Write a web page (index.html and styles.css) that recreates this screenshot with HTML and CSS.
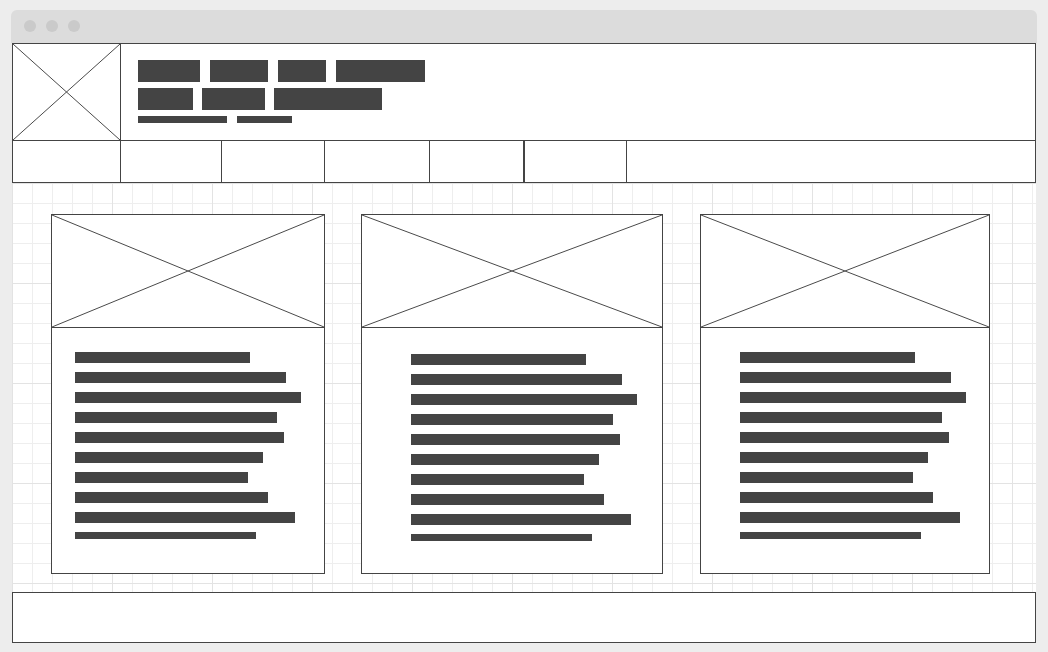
FILE: index.html
```html
<!DOCTYPE html>
<html lang="en">
<head>
    <meta charset="UTF-8">
    <meta name="viewport" content="width=device-width, initial-scale=1.0">
    <title>Wireframe</title>
    <link rel="stylesheet" href="styles.css">
</head>
<body>
    <div class="window">
        <div class="titlebar">
            <span class="dot"></span>
            <span class="dot"></span>
            <span class="dot"></span>
        </div>

        <div class="header">
            <div class="header-top">
                <div class="logo">
                    <svg class="cross" viewBox="0 0 100 100" preserveAspectRatio="none">
                        <line x1="0" y1="0" x2="100" y2="100" />
                        <line x1="100" y1="0" x2="0" y2="100" />
                    </svg>
                </div>
                <div class="title-block">
                    <div class="title-row">
                        <span class="blk" style="width: 62px"></span>
                        <span class="blk" style="width: 58px"></span>
                        <span class="blk" style="width: 48px"></span>
                        <span class="blk" style="width: 89px"></span>
                    </div>
                    <div class="title-row tight">
                        <span class="blk" style="width: 55px"></span>
                        <span class="blk" style="width: 63px"></span>
                        <span class="blk" style="width: 108px"></span>
                    </div>
                    <div class="title-row sub">
                        <span class="blk" style="width: 89px"></span>
                        <span class="blk" style="width: 55px"></span>
                    </div>
                </div>
            </div>
            <div class="nav">
                <div class="nav-cell" style="width: 108px"></div>
                <div class="nav-cell" style="width: 101px"></div>
                <div class="nav-cell" style="width: 103px"></div>
                <div class="nav-cell" style="width: 105px"></div>
                <div class="nav-cell heavy" style="width: 95px"></div>
                <div class="nav-cell" style="width: 102px"></div>
                <div class="nav-cell last"></div>
            </div>
        </div>

        <div class="main">
            <div class="card card-a">
                <div class="card-img">
                    <svg class="cross" viewBox="0 0 100 100" preserveAspectRatio="none">
                        <line x1="0" y1="0" x2="100" y2="100" />
                        <line x1="100" y1="0" x2="0" y2="100" />
                    </svg>
                </div>
                <div class="card-body">
                    <span class="line" style="width: 175px"></span>
                    <span class="line" style="width: 211px"></span>
                    <span class="line" style="width: 226px"></span>
                    <span class="line" style="width: 202px"></span>
                    <span class="line" style="width: 209px"></span>
                    <span class="line" style="width: 188px"></span>
                    <span class="line" style="width: 173px"></span>
                    <span class="line" style="width: 193px"></span>
                    <span class="line" style="width: 220px"></span>
                    <span class="line short" style="width: 181px"></span>
                </div>
            </div>

            <div class="card card-b">
                <div class="card-img">
                    <svg class="cross" viewBox="0 0 100 100" preserveAspectRatio="none">
                        <line x1="0" y1="0" x2="100" y2="100" />
                        <line x1="100" y1="0" x2="0" y2="100" />
                    </svg>
                </div>
                <div class="card-body">
                    <span class="line" style="width: 175px"></span>
                    <span class="line" style="width: 211px"></span>
                    <span class="line" style="width: 226px"></span>
                    <span class="line" style="width: 202px"></span>
                    <span class="line" style="width: 209px"></span>
                    <span class="line" style="width: 188px"></span>
                    <span class="line" style="width: 173px"></span>
                    <span class="line" style="width: 193px"></span>
                    <span class="line" style="width: 220px"></span>
                    <span class="line short" style="width: 181px"></span>
                </div>
            </div>

            <div class="card card-c">
                <div class="card-img">
                    <svg class="cross" viewBox="0 0 100 100" preserveAspectRatio="none">
                        <line x1="0" y1="0" x2="100" y2="100" />
                        <line x1="100" y1="0" x2="0" y2="100" />
                    </svg>
                </div>
                <div class="card-body">
                    <span class="line" style="width: 175px"></span>
                    <span class="line" style="width: 211px"></span>
                    <span class="line" style="width: 226px"></span>
                    <span class="line" style="width: 202px"></span>
                    <span class="line" style="width: 209px"></span>
                    <span class="line" style="width: 188px"></span>
                    <span class="line" style="width: 173px"></span>
                    <span class="line" style="width: 193px"></span>
                    <span class="line" style="width: 220px"></span>
                    <span class="line short" style="width: 181px"></span>
                </div>
            </div>
        </div>

        <div class="footer"></div>
    </div>
</body>
</html>
```

FILE: styles.css
```css
* {
    box-sizing: border-box;
}
body {
    margin: 0;
    padding-top: 10px;
    background-color: #ededed;
    font-family: "Liberation Sans", Arial, sans-serif;
}
.window {
    width: 1026px;
    margin-left: 11px;
}
.titlebar {
    height: 33px;
    background-color: #dcdcdc;
    border-radius: 6px 6px 0 0;
    display: flex;
    align-items: center;
    gap: 10px;
    padding-left: 13px;
    padding-bottom: 1px;
}
.dot {
    width: 12px;
    height: 12px;
    border-radius: 50%;
    background-color: #cacaca;
}

/* header: logo + title blocks, nav row under it */
.header {
    margin: 0 1px;
    border: 1px solid #444;
    background-color: #fff;
}
.header-top {
    display: flex;
    height: 97px;
    border-bottom: 1px solid #444;
}
.logo {
    width: 108px;
    border-right: 1px solid #444;
}
.cross {
    display: block;
    width: 100%;
    height: 100%;
}
.cross line {
    stroke: #4a4a4a;
    stroke-width: 1;
    vector-effect: non-scaling-stroke;
}
.title-block {
    padding: 16px 0 0 17px;
    display: flex;
    flex-direction: column;
    gap: 6px;
}
.title-row {
    display: flex;
    gap: 10px;
}
.title-row.tight {
    gap: 9px;
}
.blk {
    display: block;
    height: 22px;
    background-color: #444;
}
.title-row.sub .blk {
    height: 7px;
}
.nav {
    display: flex;
    height: 41px;
}
.nav-cell {
    border-right: 1px solid #444;
}
.nav-cell.heavy {
    border-right-width: 2px;
}
.nav-cell.last {
    flex: 1;
    border-right: none;
}

/* grid canvas with cards */
.main {
    margin: 0 1px;
    height: 409px;
    background-color: #fff;
    background-image:
        linear-gradient(#e3e3e3 1px, transparent 1px),
        linear-gradient(90deg, #e3e3e3 1px, transparent 1px),
        linear-gradient(#eeeeee 1px, transparent 1px),
        linear-gradient(90deg, #eeeeee 1px, transparent 1px);
    background-size: 100px 100px, 100px 100px, 20px 20px, 20px 20px;
    display: flex;
    align-items: flex-start;
    gap: 36px;
    padding: 31px 0 0 39px;
}
.card {
    height: 360px;
    border: 1px solid #444;
    background-color: #fff;
}
.card-a {
    width: 274px;
}
.card-b {
    width: 302px;
}
.card-c {
    width: 290px;
    margin-left: 1px;
}
.card-img {
    height: 113px;
    border-bottom: 1px solid #444;
}
.card-body {
    padding: 24px 0 0 23px;
}
.card-b .card-body {
    padding: 26px 0 0 49px;
}
.card-c .card-body {
    padding: 24px 0 0 39px;
}
.line {
    display: block;
    height: 11px;
    margin-bottom: 9px;
    background-color: #444;
}
.line.short {
    height: 7px;
}

.footer {
    margin: 0 1px;
    height: 51px;
    border: 1px solid #444;
    background-color: #fff;
}
```
